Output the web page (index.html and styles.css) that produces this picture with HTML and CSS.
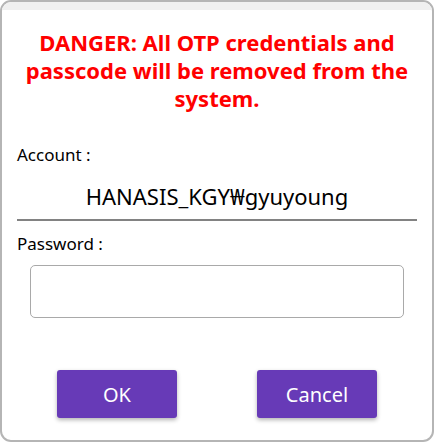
FILE: index.html
```html
<!DOCTYPE html>
<html lang="ko">
<head>
    <meta charset="UTF-8">
    <meta name="viewport" content="width=device-width, initial-scale=1.0">
    <title>Remove OTP</title>
    <link rel="stylesheet" href="styles.css">
</head>
<body>
    <div class="dialog">
        <div class="titlebar"></div>

        <div class="content">
            <h1 class="warning">DANGER: All OTP credentials and passcode will be removed from the system.</h1>

            <label class="field-label">Account :</label>
            <div class="account">HANASIS_KGY₩gyuyoung</div>

            <label class="field-label" for="password">Password :</label>
            <div class="password-row">
                <input type="password" id="password" class="password">
            </div>

            <div class="buttons">
                <button class="btn">OK</button>
                <button class="btn">Cancel</button>
            </div>
        </div>
    </div>
</body>
</html>
```

FILE: styles.css
```css
/* Page */
html, body {
    margin: 0;
    padding: 0;
    background-color: white;
}

body {
    font-family: "Noto Sans", "Noto Sans CJK KR", sans-serif;
    color: #000;
}

/* Dialog window */
.dialog {
    box-sizing: border-box;
    width: 434px;
    height: 442px;
    border: 2px solid #b5b5b5;
    border-radius: 11px;
    background-color: white;
    overflow: hidden;
}

.titlebar {
    height: 8px;
    background-color: #f0f0f0;
}

.content {
    padding: 18px 15px 0 15px;
}

/* Red warning text */
.warning {
    margin: 0 0 33px 0;
    color: #ff0000;
    font-size: 22px;
    font-weight: bold;
    line-height: 28px;
    text-align: center;
    padding: 0 8px;
}

.field-label {
    display: block;
    font-size: 17px;
    line-height: 20px;
}

.account {
    margin: 16px 0 13px 0;
    padding-bottom: 8px;
    font-size: 22px;
    line-height: 30px;
    text-align: center;
    border-bottom: 2px solid #828282;
}

.password-row {
    padding: 11px 13px 0 13px;
}

.password {
    box-sizing: border-box;
    width: 100%;
    height: 53px;
    border: 1px solid #a9a9a9;
    border-radius: 5px;
    outline: none;
    font-size: 16px;
    padding: 0 10px;
}

/* Buttons */
.buttons {
    display: flex;
    justify-content: center;
    gap: 80px;
    margin-top: 52px;
}

.btn {
    width: 120px;
    height: 48px;
    border: none;
    border-radius: 3px;
    background-color: #673ab7;
    color: white;
    font-family: "Noto Sans", sans-serif;
    font-size: 20px;
    box-shadow: 0 2px 4px rgba(0, 0, 0, 0.3);
    cursor: pointer;
}
```
